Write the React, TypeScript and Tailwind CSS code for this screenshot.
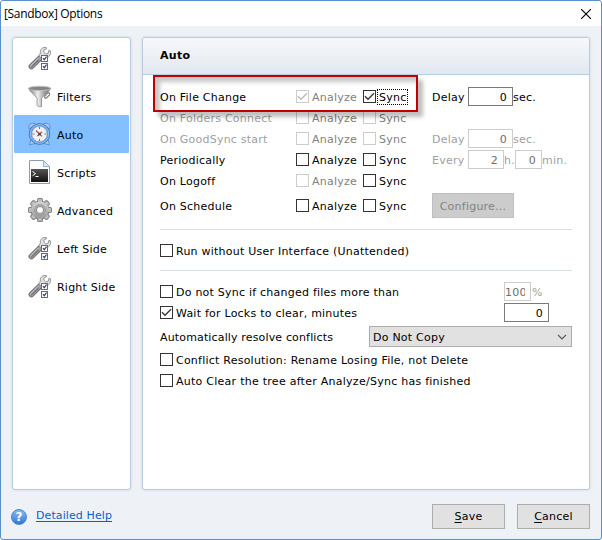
import { useState } from "react";
import type { ReactNode } from "react";
import clsx from "clsx";

function ToolsIcon() {
    return (
        <svg width="24" height="24" viewBox="0 0 24 24">
            <path d="M3.4 20.6 L11.8 12.2" stroke="#66666a" strokeWidth="5.6" strokeLinecap="round" />
            <path d="M3.4 20.6 L11.8 12.2" stroke="#a2a2a5" strokeWidth="3.8" strokeLinecap="round" />
            <path d="M2.8 19.6 L10 12.4" stroke="#cfcfd1" strokeWidth="1" strokeLinecap="round" />
            <path d="M3.6 20.8 L10.4 14" stroke="#707074" strokeWidth="1.2" strokeLinecap="round" />
            <path
                d="M18.3 1.6 C14.8 .6 11.6 3.4 12.4 7.2 L10.8 9.8 L14.3 13.2 L16.8 11.6 C20.6 12 23.4 8.8 22.4 4.8 L20.9 4.2 L20.4 7 L17.8 7.9 L15.8 6.2 L16 3.8 L18.5 2.8 Z"
                fill="#e0e0e0"
                stroke="#8a8a8d"
                strokeWidth=".9"
            />
            <rect x="13.5" y="9.5" width="6" height="6" fill="#fff" stroke="#5a698c" />
            <rect x="13.5" y="17.5" width="6" height="6" fill="#fff" stroke="#5a698c" />
            <path d="M15 12.2 l1.3 1.5 l2.2 -3 M15 20.2 l1.3 1.5 l2.2 -3" fill="none" stroke="#31446e" strokeWidth="1.2" />
        </svg>
    );
}

function FilterIcon() {
    return (
        <svg width="24" height="24" viewBox="0 0 24 24">
            <defs>
                <linearGradient id="funnel" x1="0" x2="1">
                    <stop offset="0" stopColor="#777" />
                    <stop offset=".42" stopColor="#eee" />
                    <stop offset=".7" stopColor="#a0a0a0" />
                    <stop offset="1" stopColor="#777" />
                </linearGradient>
            </defs>
            <path d="M17 12 L20 8.6 Q22.3 8.6 21.5 11 L18.5 14 Q16 14.6 17 12Z" fill="none" stroke="#77777a" strokeWidth="1.1" />
            <path d="M.6 4.2 Q1 6.2 3 7.8 L9 14.2 V21.5 Q11 23.4 13.5 22.6 V14.2 L20 7.8 Q22.3 6.2 22.6 4.2Z" fill="url(#funnel)" stroke="#808080" strokeWidth=".7" />
            <ellipse cx="11.6" cy="4.4" rx="11.2" ry="2.2" fill="#858585" stroke="#c4c4c4" strokeWidth=".9" />
        </svg>
    );
}

function ClockIcon() {
    return (
        <svg width="24" height="24" viewBox="0 0 24 24">
            <g fill="#a9cbee" stroke="#5486bb" strokeWidth=".8">
                <path d="M1 7 Q.3 2 4 1.2 Q6.5 .8 8 2.5Z M22 7 Q22.7 2 19 1.2 Q16.5 .8 15 2.5Z" />
                <path d="M1.5 22.8 L3 17.5 L7.5 21.5Z M21.5 22.8 L20 17.5 L15.5 21.5Z" />
            </g>
            <circle cx="11.5" cy="12" r="10.4" fill="#5b9be0" stroke="#3a74b8" strokeWidth=".8" />
            <circle cx="11.5" cy="12" r="9.3" fill="none" stroke="#96c2f2" strokeWidth=".9" />
            <circle cx="11.5" cy="12" r="7.8" fill="#eef1f3" stroke="#7c9dc0" strokeWidth=".8" />
            <path d="M11.5 5v2 M11.5 17v2 M4.5 12h2 M16.5 12h2" stroke="#697580" />
            <path d="M11.5 12 L8 8.5 M11.5 12 L13.8 14.3" stroke="#da3430" strokeWidth="1.1" />
            <path d="M9.5 14 L14 9.8" stroke="#555" strokeWidth="1.1" />
            <circle cx="11.5" cy="12" r="1.2" fill="#454545" />
        </svg>
    );
}

function ScriptIcon() {
    return (
        <svg width="24" height="24" viewBox="0 0 24 24">
            <defs>
                <linearGradient id="console" x1="0" y1="0" x2="0" y2="1">
                    <stop offset="0" stopColor="#555" />
                    <stop offset="1" stopColor="#111" />
                </linearGradient>
            </defs>
            <path d="M1.5 .5 H15.5 L21.5 6.5 V23.5 H1.5Z" fill="#fdfdfd" stroke="#8b9caf" />
            <path d="M15.5 .5 V6.5 H21.5Z" fill="#dce9f5" stroke="#8fb2d2" />
            <rect x="3" y="9" width="17" height="13" fill="url(#console)" />
            <path d="M4.5 11.5 L7.5 13.7 L4.5 15.8 M7.5 16.5 H10.5" fill="none" stroke="#fff" />
        </svg>
    );
}

const teeth = [0, 45, 90, 135, 180, 225, 270, 315];

function GearIcon() {
    return (
        <svg width="24" height="24" viewBox="0 0 24 24">
            <defs>
                <linearGradient id="gear" x1="0" y1="0" x2="0" y2="24" gradientUnits="userSpaceOnUse">
                    <stop offset="0" stopColor="#dedede" />
                    <stop offset="1" stopColor="#8f8f8f" />
                </linearGradient>
            </defs>
            <g fill="#7d7d7d">
                {teeth.map(angle => (
                    <rect key={angle} x="9.1" y="0" width="5.8" height="7" rx="1.6" transform={`rotate(${angle} 12 12)`} />
                ))}
                <circle cx="12" cy="12" r="9.6" />
            </g>
            {teeth.map(angle => (
                <rect key={angle} x="10" y=".9" width="4" height="6" rx="1" fill="#c0c0c0" transform={`rotate(${angle} 12 12)`} />
            ))}
            <circle cx="12" cy="12" r="8.8" fill="url(#gear)" />
            <circle cx="12" cy="12" r="5.4" fill="#aaa" stroke="#8e8e8e" strokeWidth=".6" />
            <circle cx="12" cy="12" r="3.5" fill="#fff" stroke="#858585" strokeWidth=".9" />
        </svg>
    );
}

function HelpIcon() {
    return (
        <span className="flex size-4 items-center justify-center rounded-full border border-[#4c82c2] bg-linear-to-b from-[#8bbaf0] to-[#2a78dd] text-[12px] leading-none font-bold text-white">
            ?
        </span>
    );
}

interface CheckProps {
    label: string;
    checked?: boolean;
    disabled?: boolean;
    focused?: boolean;
    className?: string;
}

function Check({ label, checked = false, disabled = false, focused = false, className }: CheckProps) {
    const [on, setOn] = useState(checked);

    return (
        <button
            disabled={disabled}
            onClick={() => setOn(!on)}
            className={clsx("flex h-[21px] items-center whitespace-nowrap", disabled ? "text-[#808080]" : "text-black", className)}
        >
            <span className={clsx("size-[13px] shrink-0 border bg-white", disabled ? "border-[#cccccc]" : "border-[#333333]")}>
                {on && (
                    <svg width="11" height="11" viewBox="0 0 11 11">
                        <path d="M1 5.3 L4 8.3 L10 2.3" fill="none" stroke={disabled ? "#b8b8b8" : "#333"} strokeWidth="1.3" />
                    </svg>
                )}
            </span>
            <span className={clsx("ml-px border border-dotted px-px pt-px leading-[13px]", focused ? "border-black" : "border-transparent")}>
                {label}
            </span>
        </button>
    );
}

function NumberBox({ value, disabled, className }: { value: string; disabled?: boolean; className: string }) {
    return (
        <input
            defaultValue={value}
            disabled={disabled}
            className={clsx(
                "h-[19px] shrink-0 border bg-white pt-px pr-[5px] text-right outline-none",
                disabled ? "border-[#cccccc] text-[#6d6d6d]" : "border-[#7a7a7a] text-black",
                className
            )}
        />
    );
}

interface TriggerRowProps {
    label: string;
    off?: boolean;
    analyze?: Partial<CheckProps>;
    sync?: Partial<CheckProps>;
    tall?: boolean;
    children?: ReactNode;
}

function TriggerRow({ label, off, analyze, sync, tall, children }: TriggerRowProps) {
    return (
        <div className={clsx("flex items-center", tall ? "mt-0.5 h-[25px]" : "h-[21px]")}>
            <span className={clsx("w-[136px] pt-[3px] whitespace-nowrap", off && "text-[#a0a0a0]")}>{label}</span>
            <Check label="Analyze" className="w-[67px]" {...analyze} />
            <Check label="Sync" className="w-[69px]" {...sync} />
            {children}
        </div>
    );
}

const pages = [
    { name: "General", icon: <ToolsIcon /> },
    { name: "Filters", icon: <FilterIcon /> },
    { name: "Auto", icon: <ClockIcon /> },
    { name: "Scripts", icon: <ScriptIcon /> },
    { name: "Advanced", icon: <GearIcon /> },
    { name: "Left Side", icon: <ToolsIcon /> },
    { name: "Right Side", icon: <ToolsIcon /> },
];

export default function App() {
    const [page, setPage] = useState("Auto");

    return (
        <div className="flex h-[540px] w-[602px] flex-col rounded-[3px] border border-[#5b8fce] bg-[#eef2f7] font-['DejaVu_Sans',Verdana,sans-serif] text-[11px] tracking-[0.23px] text-black">
            <header className="flex h-[25px] shrink-0 items-center justify-between rounded-t-[3px] bg-white pr-[10px] pl-[3px] font-['Open_Sans',sans-serif] text-[12px] tracking-[-0.34px]">
                <span>[Sandbox] Options</span>
                <svg width="10" height="10" viewBox="0 0 10 10">
                    <path d="M0 0 L10 10 M10 0 L0 10" stroke="#000" strokeWidth="1.1" />
                </svg>
            </header>

            <div className="mt-[11px] flex h-[453px] shrink-0 gap-[11px] px-[11px]">
                <nav className="w-[119px] rounded-[3px] border border-[#bccbda] bg-white p-px shadow-[0_0_3px_#cbd8e2]">
                    {pages.map(item => (
                        <button
                            key={item.name}
                            onClick={() => setPage(item.name)}
                            className={clsx(
                                "flex h-[38px] w-full items-center gap-[5px] rounded-[1px] pl-[14px]",
                                item.name === page && "bg-[#84bfff]"
                            )}
                        >
                            {item.icon}
                            <span className="pt-1 whitespace-nowrap">{item.name}</span>
                        </button>
                    ))}
                </nav>

                <main className="w-[448px] rounded-[3px] border border-[#bccbda] bg-white shadow-[0_0_3px_#cbd8e2]">
                    <h1 className="flex h-[37px] items-center rounded-t-[2px] border-b border-[#bccbda] bg-linear-to-b from-[#f7f8fa] to-[#e2e8f0] pl-[17px] font-bold tracking-[0.3px]">
                        Auto
                    </h1>

                    <div className="relative px-[17px] pt-[11px]">
                        <div className="pointer-events-none absolute top-0 left-[10px] h-[37px] w-[265px] border-2 border-[#c00000] shadow-[5px_5px_4px_rgba(0,0,0,0.25),inset_5px_5px_4px_rgba(0,0,0,0.22)]" />

                        <TriggerRow label="On File Change" analyze={{ checked: true, disabled: true }} sync={{ checked: true, focused: true }}>
                            <span className="w-[36px] pt-[3px]">Delay</span>
                            <NumberBox value="0" className="w-[45px]" />
                            <span className="pt-[3px]">sec.</span>
                        </TriggerRow>
                        <TriggerRow label="On Folders Connect" off analyze={{ disabled: true }} sync={{ disabled: true }} />
                        <TriggerRow label="On GoodSync start" off analyze={{ disabled: true }} sync={{ disabled: true }}>
                            <span className="w-[36px] pt-[3px] text-[#a0a0a0]">Delay</span>
                            <NumberBox value="0" disabled className="w-[45px]" />
                            <span className="pt-[3px] text-[#a0a0a0]">sec.</span>
                        </TriggerRow>
                        <TriggerRow label="Periodically">
                            <span className="w-[36px] pt-[3px] text-[#a0a0a0]">Every</span>
                            <NumberBox value="2" disabled className="w-[36px]" />
                            <span className="w-[11px] pt-[3px] text-[#a0a0a0]">h.</span>
                            <NumberBox value="0" disabled className="w-[27px]" />
                            <span className="pt-[3px] text-[#a0a0a0]">min.</span>
                        </TriggerRow>
                        <TriggerRow label="On Logoff" analyze={{ disabled: true }} />
                        <TriggerRow label="On Schedule" tall>
                            <button disabled className="h-[25px] w-[82px] border border-[#bfbfbf] bg-[#cccccc] pt-[3px] text-[#838383]">
                                Configure...
                            </button>
                        </TriggerRow>

                        <div className="mt-[11px] mb-[10px] h-px w-[412px] bg-[#d4dfe8]" />
                        <Check label="Run without User Interface (Unattended)" />
                        <div className="mt-[9px] mb-[10px] h-px w-[412px] bg-[#d4dfe8]" />

                        <div className="flex h-[21px] items-center">
                            <Check label="Do not Sync if changed files more than" className="w-[344px]" />
                            <NumberBox value="100" disabled className="w-[27px]" />
                            <span className="ml-px pt-[3px] text-[#a0a0a0]">%</span>
                        </div>
                        <div className="flex h-[21px] items-center">
                            <Check label="Wait for Locks to clear, minutes" checked className="w-[344px]" />
                            <NumberBox value="0" className="w-[45px]" />
                        </div>
                        <div className="mt-[3px] mb-0.5 flex h-[21px] items-center">
                            <span className="w-[209px] pt-[3px] tracking-[0.15px] whitespace-nowrap">Automatically resolve conflicts</span>
                            <button className="flex h-[21px] w-[203px] items-center justify-between border border-[#adadad] bg-[#e1e1e1] pr-1 pl-[3px]">
                                <span className="pt-[3px]">Do Not Copy</span>
                                <svg width="10" height="6" viewBox="0 0 10 6">
                                    <path d="M1 1 L5 5 L9 1" fill="none" stroke="#555" strokeWidth="1.1" />
                                </svg>
                            </button>
                        </div>
                        <Check label="Conflict Resolution: Rename Losing File, not Delete" />
                        <Check label="Auto Clear the tree after Analyze/Sync has finished" className="tracking-[0.26px]" />
                    </div>
                </main>
            </div>

            <footer className="flex items-center px-[11px] pt-[14px]">
                <div className="-ml-px flex flex-1 items-center">
                    <HelpIcon />
                    <a href="#" className="ml-[9px] tracking-[0.1px] text-[#0a5fc8] underline underline-offset-2">Detailed Help</a>
                </div>
                <button className="h-[25px] w-[73px] border border-[#adadad] bg-[#e1e1e1] pt-0.5">
                    <u className="underline-offset-2">S</u>ave
                </button>
                <button className="ml-3 h-[25px] w-[73px] border border-[#adadad] bg-[#e1e1e1] pt-0.5">
                    <u className="underline-offset-2">C</u>ancel
                </button>
            </footer>
        </div>
    );
}
